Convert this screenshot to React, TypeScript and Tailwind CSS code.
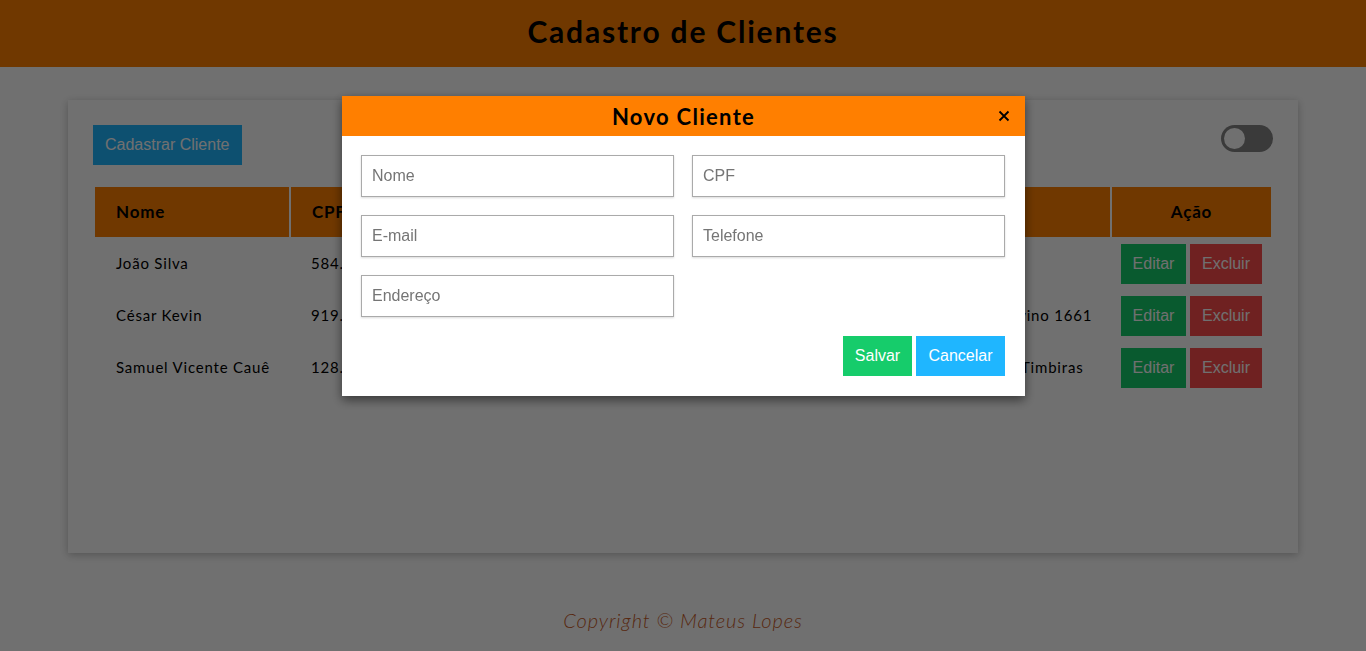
import { useState } from 'react';

const clientes = [
  { nome: 'João Silva', cpf: '584.210.330-12', email: 'joao@email.com', telefone: '(11) 98765-4321', endereco: 'Rua das Flores 12' },
  { nome: 'César Kevin', cpf: '919.305.448-70', email: 'cesar@email.com', telefone: '(21) 99812-3344', endereco: 'Rua Dr. Carlos Silvino 1661' },
  { nome: 'Samuel Vicente Cauê', cpf: '128.874.902-55', email: 'samuel@email.com', telefone: '(31) 98123-7788', endereco: 'Rua Coronel José Timbiras' },
];

const karla = { fontFamily: 'Lato, "Open Sans", sans-serif' };

export default function App() {
  const [aberto, setAberto] = useState(true);

  return (
    <div className="min-h-screen bg-white flex flex-col" style={karla}>
      <header className="bg-[#ff7f00] h-[67px] flex items-center justify-center pb-[4px]">
        <h1 className="text-[30px] font-bold text-black tracking-[1.8px]">Cadastro de Clientes</h1>
      </header>

      <main className="mx-[68px] mt-[33px] h-[453px] bg-white shadow-[0_2px_8px_rgba(0,0,0,0.25)] px-[25px] pt-[25px]">
        <div className="flex items-start justify-between">
          <button className="bg-[#1fb6ff] text-white h-10 px-3 text-[16px] font-['Liberation_Sans',Arial,sans-serif]">Cadastrar Cliente</button>
          <div className="w-[52px] h-[27px] rounded-full bg-[#848484] flex items-center px-[3px]">
            <div className="w-[21px] h-[21px] rounded-full bg-white"></div>
          </div>
        </div>

        <table className="mt-[22px] ml-[2px] w-[1176px] border-collapse text-[15px] text-black">
          <thead>
            <tr className="bg-[#ff7f00] h-[50px] text-[17px] font-bold">
              <th className="w-[195px] text-left pl-[21px] border-r-2 border-white tracking-[0.8px]">Nome</th>
              <th className="w-[170px] text-left pl-[21px] border-r-2 border-white tracking-[0.8px]">CPF</th>
              <th className="w-[230px] text-left pl-[21px] border-r-2 border-white tracking-[0.8px]">E-mail</th>
              <th className="w-[180px] text-left pl-[21px] border-r-2 border-white tracking-[0.8px]">Telefone</th>
              <th className="text-left pl-[21px] border-r-2 border-white tracking-[0.8px]">Endereço</th>
              <th className="w-[160px] text-center tracking-[0.8px]">Ação</th>
            </tr>
          </thead>
          <tbody>
            {clientes.map((c) => (
              <tr key={c.cpf} className="h-[52px]">
                <td className="pl-[21px] tracking-[0.8px]">{c.nome}</td>
                <td className="pl-[21px] tracking-[0.8px]">{c.cpf}</td>
                <td className="pl-[21px] tracking-[0.8px]">{c.email}</td>
                <td className="pl-[21px] tracking-[0.8px]">{c.telefone}</td>
                <td className="pl-[21px] tracking-[0.8px]">{c.endereco}</td>
                <td className="pl-[10px] pt-[2px]">
                  <div className="flex gap-1 font-['Liberation_Sans',Arial,sans-serif] text-[16px] text-white">
                    <button className="bg-[#16cc6b] h-10 w-[65px]">Editar</button>
                    <button className="bg-[#fd4d4d] h-10 w-[72px]">Excluir</button>
                  </div>
                </td>
              </tr>
            ))}
          </tbody>
        </table>
      </main>

      <footer className="h-[98px] flex items-center justify-center pt-[36px]">
        <p className="italic font-light text-[20px] text-[#c85a26] tracking-[0.9px]">Copyright © Mateus Lopes</p>
      </footer>

      {aberto && (
        <div className="fixed inset-0 bg-[rgba(0,0,0,0.56)]">
          <div className="absolute left-[342px] top-[96px] w-[683px] bg-white shadow-[0_4px_10px_rgba(0,0,0,0.5)]">
            <div className="relative bg-[#ff7f00] h-10 flex items-center justify-center">
              <h2 className="text-[22px] font-bold text-black tracking-[1.3px]">Novo Cliente</h2>
              <button onClick={() => setAberto(false)} className="absolute right-[15px] top-[14px] text-black">
                <svg width="12" height="12" viewBox="0 0 12 12" stroke="currentColor" strokeWidth="1.8"><path d="M1.5 1.5l9 9M10.5 1.5l-9 9" /></svg>
              </button>
            </div>
            <div className="pl-[19px] pr-[20px] pt-[19px] pb-5 font-['Liberation_Sans',Arial,sans-serif]">
              <div className="grid grid-cols-2 gap-x-[18px] gap-y-[18px]">
                {['Nome', 'CPF', 'E-mail', 'Telefone', 'Endereço'].map((p) => (
                  <input key={p} placeholder={p} className="h-[42px] border border-[#aaa] shadow-[0_1px_2px_rgba(0,0,0,0.15)] px-[10px] text-[16px] placeholder:text-[#757575] outline-none" />
                ))}
              </div>
              <div className="flex justify-end gap-1 mt-[19px] text-[16px] text-white">
                <button className="bg-[#16cc6b] h-10 w-[69px]">Salvar</button>
                <button className="bg-[#1fb6ff] h-10 w-[89px]">Cancelar</button>
              </div>
            </div>
          </div>
        </div>
      )}
    </div>
  );
}
